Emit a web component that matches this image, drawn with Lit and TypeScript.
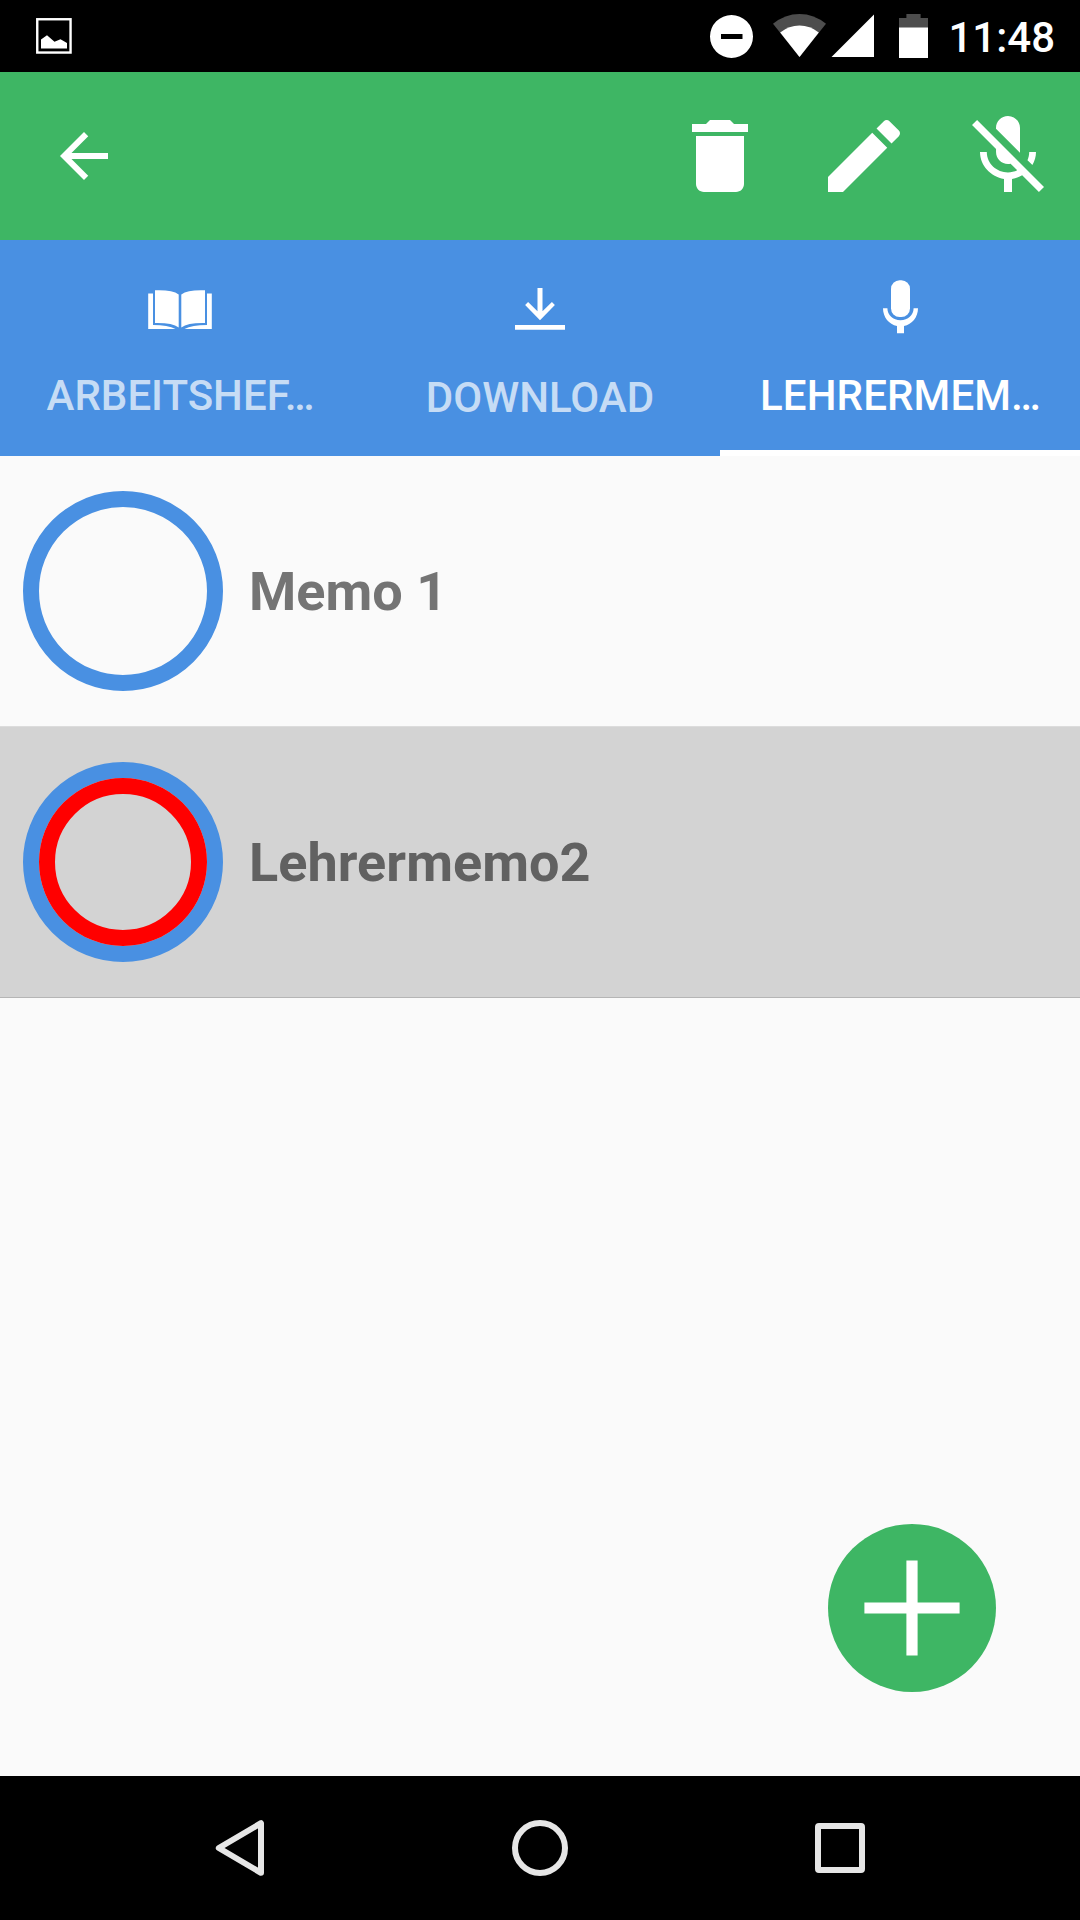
import { LitElement, html, css, svg } from "lit";
import { customElement, property } from "lit/decorators.js";
import { classMap } from "lit/directives/class-map.js";

const DELETE = "M6 19c0 1.1.9 2 2 2h8c1.1 0 2-.9 2-2V7H6v12zM19 4h-3.5l-1-1h-5l-1 1H5v2h14V4z";
const EDIT =
  "M3 17.25V21h3.75L17.81 9.94l-3.75-3.75L3 17.25zM20.71 7.04c.39-.39.39-1.02 0-1.41l-2.34-2.34c-.39-.39-1.02-.39-1.41 0l-1.83 1.83 3.75 3.75 1.83-1.83z";
const MIC_OFF =
  "M19 11h-1.7c0 .74-.16 1.43-.43 2.05l1.23 1.23c.56-.98.9-2.09.9-3.28zm-4.02.17c0-.06.02-.11.02-.17V5c0-1.66-1.34-3-3-3S9 3.34 9 5v.18l5.98 5.99zM4.27 3L3 4.27l6.01 6.01V11c0 1.66 1.33 3 2.99 3 .22 0 .44-.03.65-.08l1.66 1.66c-.71.33-1.5.52-2.31.52-2.76 0-5.3-2.1-5.3-5.1H5c0 3.41 2.72 6.23 6 6.72V21h2v-3.28c.91-.13 1.77-.45 2.54-.9L19.73 21 21 19.73 4.27 3z";
const BACK = "M20 11H7.83l5.59-5.59L12 4l-8 8 8 8 1.41-1.41L7.83 13H20v-2z";

@customElement("status-bar")
class StatusBar extends LitElement {
  static styles = css`
    :host {
      display: flex;
      align-items: center;
      height: 72px;
      background: #000;
      color: #fff;
      fill: #fff;
    }
    svg {
      display: block;
      flex: none;
    }
    .picture {
      margin-left: 36px;
    }
    .system {
      display: flex;
      margin-left: auto;
    }
    .time {
      box-sizing: border-box;
      height: 72px;
      padding-top: 2px;
      font: 500 42px/72px Roboto, sans-serif;
      width: 115px;
      margin-right: 25px;
      text-align: right;
      white-space: nowrap;
    }
  `;

  render() {
    return html`
      <svg class="picture" width="36" height="36" viewBox="0 0 36 36">
        <rect x="1.25" y="1.25" width="33.3" height="33.3" fill="none" stroke="#fff" stroke-width="2.4" />
        <path d="M5 30.5V21.5L11 17.2L18.5 23.7L24.5 21.2L31 25V30.5Z" />
      </svg>
      <div class="system">
        <svg width="240" height="72" viewBox="700 0 240 72">
          <path fill-rule="evenodd" d="M731.5 15a21.5 21.5 0 1 0 0 43a21.5 21.5 0 1 0 0-43zM721 34v5h21.5v-5z" />
          <path fill="#4d4d4d" d="M799.5 57L773 23.8Q785 14 799.5 14T826 23.8z" />
          <path d="M799.5 57L780.2 32.5Q789 25.6 799.5 25.6T818.8 32.5z" />
          <path d="M874 14.5V57H831.5z" />
          <path fill="#4d4d4d" d="M899 28V18h7.4v-4H920.6v4H928v10z" />
          <path d="M899 27.5h29V58h-29z" />
        </svg>
      </div>
      <div class="time">11:48</div>
    `;
  }
}

@customElement("app-toolbar")
class AppToolbar extends LitElement {
  static styles = css`
    :host {
      display: flex;
      align-items: center;
      height: 168px;
      padding: 0 24px 0 48px;
      background: #3eb664;
      fill: #fff;
    }
    svg {
      display: block;
    }
    .actions {
      display: flex;
      gap: 48px;
      margin-left: auto;
    }
  `;

  render() {
    return html`
      <svg width="72" height="72" viewBox="0 0 24 24"><path d=${BACK} /></svg>
      <div class="actions">
        ${[DELETE, EDIT, MIC_OFF].map(
          (d) => html`<svg width="96" height="96" viewBox="0 0 24 24"><path d=${d} /></svg>`
        )}
      </div>
    `;
  }
}

const BOOK = svg`
  <path d="M8.2 13.5H13V45Q28 45.1 35.5 49H8.2z" />
  <path d="M71.8 13.5H67V45Q52 45.1 44.5 49H71.8z" />
  <path d="M15 10.3Q32 9.6 38.7 14.4V47.4Q32 42.6 15 43z" />
  <path d="M65 10.3Q48 9.6 41.3 14.4V47.4Q48 42.6 65 43z" />`;
const DOWNLOAD = svg`
  <path d="M37.5 8h5v23.2l9.4-9.2 3 3L40 40.3 25.1 25l3-3 9.4 9.2z" />
  <path d="M15 44.9h50v4.9H15z" />`;
const MIC = svg`
  <rect x="31" y="0.3" width="19" height="36.8" rx="8.6" />
  <path d="M23 28.3h4.4c0 7 5.6 11.9 13.1 11.9s13.1-4.9 13.1-11.9H58c0 9-6 16.2-14 17.7v7.3h-7V46c-8-1.5-14-8.7-14-17.7z" />`;

@customElement("tab-strip")
class TabStrip extends LitElement {
  static styles = css`
    :host {
      display: grid;
      grid-template-columns: repeat(3, 1fr);
      height: 216px;
      background: #4990e2;
    }
    .tab {
      display: flex;
      flex-direction: column;
      align-items: center;
      box-sizing: border-box;
      padding-top: 40px;
      border-bottom: 6px solid transparent;
      color: rgba(255, 255, 255, 0.7);
      font: 500 42px/50px Roboto, sans-serif;
    }
    .selected {
      color: #fff;
      border-bottom-color: #fff;
    }
    .label {
      margin-top: 31px;
      padding-left: 1px;
      white-space: nowrap;
    }
    .selected .label {
      letter-spacing: 0.12px;
    }
    .low .label {
      margin-top: 33px;
      padding-left: 0;
    }
    svg {
      display: block;
      fill: #fff;
    }
  `;

  render() {
    const tabs = [
      { icon: BOOK, label: "ARBEITSHEF…", low: false, selected: false },
      { icon: DOWNLOAD, label: "DOWNLOAD", low: true, selected: false },
      { icon: MIC, label: "LEHRERMEM…", low: false, selected: true },
    ];
    return tabs.map(
      (t) => html`<div class=${classMap({ tab: true, low: t.low, selected: t.selected })}>
        <svg width="80" height="60" viewBox="0 0 80 60">${t.icon}</svg>
        <div class="label">${t.label}</div>
      </div>`
    );
  }
}

@customElement("memo-row")
class MemoRow extends LitElement {
  @property() name = "";
  @property({ type: Boolean, reflect: true }) active = false;

  static styles = css`
    :host {
      display: flex;
      align-items: center;
      height: 270px;
      padding-left: 23px;
      gap: 26px;
      color: #747474;
      border-bottom: 1px solid #dcdcdc;
    }
    :host([active]) {
      background: #d3d3d3;
      color: #616161;
      border-bottom-color: #b5b5b5;
    }
    .ring {
      box-sizing: border-box;
      width: 200px;
      height: 200px;
      border: 16px solid #4990e2;
      border-radius: 50%;
    }
    .record {
      box-sizing: border-box;
      width: 168px;
      height: 168px;
      border: 16px solid #f00;
      border-radius: 50%;
    }
    .name {
      padding-top: 2px;
      font: 700 54px/64px Roboto, sans-serif;
      letter-spacing: 0.05px;
    }
  `;

  render() {
    return html`
      <div class="ring">${this.active ? html`<div class="record"></div>` : null}</div>
      <div class="name">${this.name}</div>
    `;
  }
}

@customElement("nav-bar")
class NavBar extends LitElement {
  static styles = css`
    :host {
      display: flex;
      justify-content: center;
      align-items: center;
      gap: 220px;
      height: 144px;
      background: #000;
    }
    svg {
      display: block;
      fill: none;
      stroke: #e6e6e6;
      stroke-width: 6;
      stroke-linejoin: round;
    }
  `;

  render() {
    return html`
      <svg width="80" height="76" viewBox="0 0 80 76"><path d="M61 13.2V62.8L18.8 38z" /></svg>
      <svg width="80" height="76" viewBox="0 0 80 76"><circle cx="40" cy="38" r="25" /></svg>
      <svg width="80" height="76" viewBox="0 0 80 76"><rect x="18" y="16" width="44" height="44" rx="1" /></svg>
    `;
  }
}

@customElement("app-root")
class AppRoot extends LitElement {
  static styles = css`
    :host {
      display: flex;
      flex-direction: column;
      width: 1080px;
      height: 1920px;
      background: #fafafa;
    }
    .content {
      position: relative;
      flex: 1;
    }
    .fab {
      position: absolute;
      right: 84px;
      bottom: 84px;
      width: 168px;
      height: 168px;
      padding: 0;
      border: 0;
      border-radius: 50%;
      background: #3eb664;
    }
    .fab svg {
      display: block;
    }
  `;

  render() {
    return html`
      <status-bar></status-bar>
      <app-toolbar></app-toolbar>
      <tab-strip></tab-strip>
      <main class="content">
        <memo-row name="Memo 1"></memo-row>
        <memo-row name="Lehrermemo2" active></memo-row>
        <button class="fab">
          <svg width="168" height="168" viewBox="0 0 168 168">
            <path fill="#fff" d="M36.4 78.4h42v-42h11.2v42h42v11.2h-42v42H78.4v-42h-42z" />
          </svg>
        </button>
      </main>
      <nav-bar></nav-bar>
    `;
  }
}
